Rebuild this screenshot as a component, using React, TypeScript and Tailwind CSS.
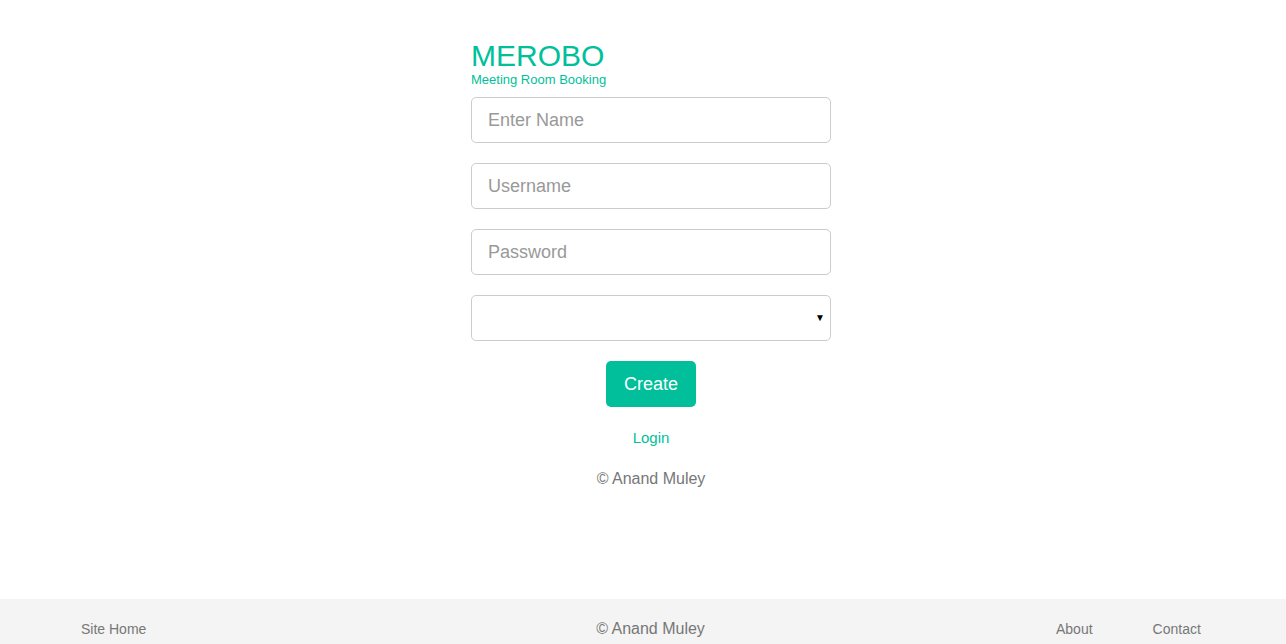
import React from 'react';

const inputCls =
  'block w-full h-[46px] px-4 border border-[#cccccc] rounded-[5px] bg-white text-[18px] text-[#333] placeholder-[#999999] focus:outline-none';

const App: React.FC = () => {
  return (
    <div className="min-h-screen flex flex-col bg-white font-['Liberation_Sans',Arial,sans-serif]">
      <main className="h-[599px] shrink-0 flex justify-center pl-4">
        <div className="w-[360px] pt-[41px]">
          <h1 className="text-[30px] leading-[30px] text-[#00bf9a]">MEROBO</h1>
          <p className="mt-[1px] text-[13px] leading-[16px] text-[#00bf9a]">Meeting Room Booking</p>
          <form className="mt-[9px] flex flex-col gap-5" onSubmit={(e) => e.preventDefault()}>
            <input className={inputCls} type="text" placeholder="Enter Name" />
            <input className={inputCls} type="text" placeholder="Username" />
            <input className={inputCls} type="password" placeholder="Password" />
            <div className="relative">
              <select className={inputCls + ' appearance-none'} defaultValue="">
                <option value=""></option>
              </select>
              <span className="absolute right-[6px] top-[15px] text-[10px] text-black pointer-events-none">▼</span>
            </div>
            <div className="flex justify-center">
              <button
                type="submit"
                className="h-[46px] px-[17.5px] rounded-[5px] bg-[#00bf9a] text-white text-[18px]"
              >
                Create
              </button>
            </div>
          </form>
          <div className="mt-[19px] text-center">
            <a href="#" className="text-[15px] text-[#00bf9a]">Login</a>
          </div>
          <p className="mt-[17px] text-center text-[16px] text-[#777777]">© Anand Muley</p>
        </div>
      </main>
      <footer className="h-[60px] shrink-0 bg-[#f4f4f4] flex items-center pl-[81px] pr-[85px] text-[#777777]">
        <div className="w-[164px]">
          <a href="#" className="text-[14px]">Site Home</a>
        </div>
        <span className="flex-1 text-center text-[16px]">© Anand Muley</span>
        <div className="w-[145px] flex gap-[60px] text-[14px]">
          <a href="#">About</a>
          <a href="#">Contact</a>
        </div>
      </footer>
    </div>
  );
};

export default App;
